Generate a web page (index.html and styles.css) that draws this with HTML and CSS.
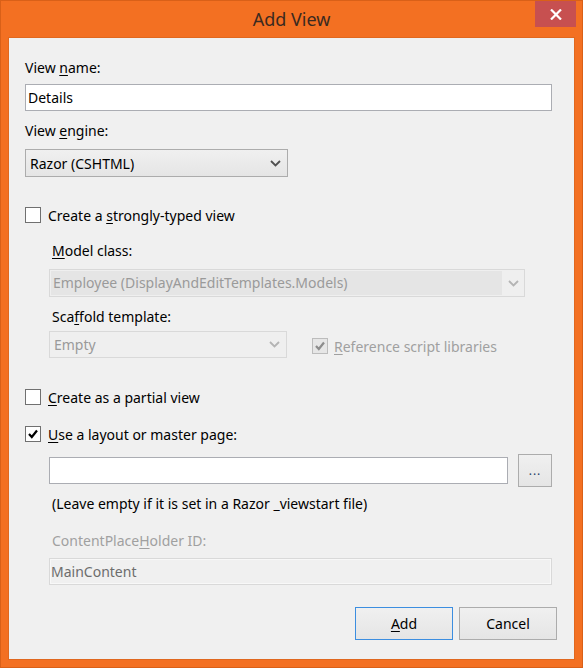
FILE: index.html
```html
<!DOCTYPE html>
<html>
<head>
<meta charset="utf-8">
<link rel="stylesheet" href="styles.css">
</head>
<body>
<div class="window">
  <div class="titlebar">
    <span></span>
    <span class="title">Add View</span>
    <span class="close"><svg width="12" height="11" viewBox="0 0 12 11"><path d="M1 0.5 L11 10.5 M11 0.5 L1 10.5" stroke="#fff" stroke-width="2.2" fill="none"/></svg></span>
  </div>
  <div class="client">
    <div class="label l-name">View <u>n</u>ame:</div>
    <div class="textbox tb-name">Details</div>
    <div class="label l-engine">View <u>e</u>ngine:</div>
    <div class="select sel-engine"><span>Razor (CSHTML)</span><svg class="chev" width="11" height="7" viewBox="0 0 11 7"><path d="M1 1 L5.5 5.5 L10 1" stroke="#505050" stroke-width="1.8" fill="none"/></svg></div>

    <div class="check-row cr-strong"><span class="box"></span><span>Create a <u>s</u>trongly-typed view</span></div>
    <div class="indent">
      <div class="label l-model"><u>M</u>odel class:</div>
      <div class="select disabled sel-model"><span class="hl">Employee (DisplayAndEditTemplates.Models)</span><svg class="chev" width="11" height="7" viewBox="0 0 11 7"><path d="M1 1 L5.5 5.5 L10 1" stroke="#b4b4b4" stroke-width="1.8" fill="none"/></svg></div>
      <div class="label l-scaffold">Sca<u>f</u>fold template:</div>
      <div class="scaffold-row">
        <div class="select disabled sel-empty"><span>Empty</span><svg class="chev" width="11" height="7" viewBox="0 0 11 7"><path d="M1 1 L5.5 5.5 L10 1" stroke="#b4b4b4" stroke-width="1.8" fill="none"/></svg></div>
        <div class="check-row ref disabled"><span class="box checked"><svg width="14" height="14" viewBox="0 0 14 14"><path d="M3 7 L5.8 10 L11 3.5" stroke="#8c8c8c" stroke-width="2.2" fill="none"/></svg></span><span><u>R</u>eference script libraries</span></div>
      </div>
    </div>

    <div class="check-row cr-partial"><span class="box"></span><span><u>C</u>reate as a partial view</span></div>
    <div class="check-row cr-layout"><span class="box"><svg width="14" height="14" viewBox="0 0 14 14"><path d="M3 7 L5.8 10 L11 3.5" stroke="#000" stroke-width="2.2" fill="none"/></svg></span><span><u>U</u>se a layout or master page:</span></div>
    <div class="indent">
      <div class="layout-row">
        <div class="textbox tb-layout"></div>
        <div class="button dots">...</div>
      </div>
      <div class="label hint">(Leave empty if it is set in a Razor _viewstart file)</div>
      <div class="label l-cph disabled-text">ContentPlace<u>H</u>older ID:</div>
      <div class="textbox disabled tb-cph">MainContent</div>
    </div>

    <div class="buttons">
      <div class="button default"><u>A</u>dd</div>
      <div class="button">Cancel</div>
    </div>
  </div>
</div>
</body>
</html>
```
FILE: styles.css
```css
* { box-sizing: border-box; }
html, body { margin: 0; padding: 0; }
body {
  font-family: "Noto Sans", "Open Sans", sans-serif;
  font-size: 14px;
  color: #000;
  background: #f37022;
  font-variant-ligatures: none;
}
u { text-decoration: underline; text-underline-offset: 2px; text-decoration-thickness: 1px; }
.window {
  width: 583px;
  height: 668px;
  background: #f37022;
  border: 1px solid #d96018;
  display: flex;
  flex-direction: column;
}
.titlebar {
  height: 36px;
  display: grid;
  grid-template-columns: 1fr auto 1fr;
  align-items: start;
}
.title {
  font-size: 18px;
  color: #3b2a20;
  line-height: 20px;
  margin-top: 8px;
}
.close {
  justify-self: end;
  width: 41px;
  height: 26px;
  margin-right: 6px;
  background: #c75050;
  display: flex;
  align-items: center;
  justify-content: center;
}
.client {
  margin: 0 7px;
  height: 623px;
  background: #f0f0f0;
  border: 1px solid #e0681f;
  padding: 0 0 0 16px;
}
.label { line-height: 20px; height: 20px; white-space: nowrap; }
.l-name { margin-top: 20px; }
.textbox {
  background: #fff;
  border: 1px solid #abadb3;
  height: 27px;
  line-height: 25px;
  padding-left: 2px;
}
.tb-name { margin-top: 6px; width: 527px; }
.l-engine { margin-top: 10px; }
.select {
  height: 28px;
  border: 1px solid #acacac;
  background: linear-gradient(#f0f0f0, #e5e5e5);
  display: flex;
  align-items: center;
  justify-content: space-between;
  padding: 0 6px 0 4px;
}
.sel-engine { margin-top: 8px; width: 263px; }
.check-row {
  display: flex;
  align-items: center;
  height: 20px;
  gap: 7px;
  white-space: nowrap;
}
.box {
  width: 16px;
  height: 16px;
  border: 1px solid #707070;
  background: #fff;
  display: flex;
  align-items: center;
  justify-content: center;
}
.cr-strong { margin-top: 28px; }
.indent { padding-left: 24px; }
.l-model { margin-top: 16px; padding-left: 3px; }
.select.disabled {
  background: #efefef;
  border-color: #d9d9d9;
  color: #9a9a9a;
}
.sel-model {
  margin-top: 8px;
  width: 476px;
  padding: 1px 5px 1px 1px;
  align-items: stretch;
}
.sel-model .hl {
  background: #e5e5e5;
  width: 451px;
  line-height: 24px;
  padding-left: 2px;
}
.sel-model .chev { align-self: center; }
.l-scaffold { margin-top: 10px; padding-left: 3px; }
.scaffold-row {
  margin-top: 4px;
  display: flex;
  align-items: center;
  gap: 25px;
}
.sel-empty { width: 238px; height: 27px; color: #a0a0a0; }
.ref { color: #a0a0a0; gap: 6px; margin-top: 3px; }
.box.checked { border-color: #bcbcbc; background: #e6e6e6; }
.cr-partial { margin-top: 29px; }
.cr-layout { margin-top: 17px; }
.layout-row {
  margin-top: 10px;
  display: flex;
  align-items: center;
  gap: 10px;
}
.tb-layout { width: 459px; }
.button {
  height: 33px;
  border: 1px solid #acacac;
  background: linear-gradient(#f0f0f0, #e5e5e5);
  display: flex;
  align-items: center;
  justify-content: center;
}
.dots { width: 34px; color: #1e3f66; font-size: 12px; letter-spacing: 1px; }
.hint { margin-top: 7px; padding-left: 3px; }
.l-cph { margin-top: 17px; padding-left: 3px; }
.disabled-text { color: #a0a0a0; }
.textbox.disabled {
  background: #f0f0f0;
  border: 1px solid #d9d9d9;
  box-shadow: inset 0 0 0 1px #f8f8f8;
  color: #6d6d6d;
}
.tb-cph { margin-top: 7px; width: 503px; padding-left: 1px; }
.buttons {
  margin-top: 22px;
  display: flex;
  justify-content: flex-end;
  gap: 6px;
  padding-right: 17px;
}
.buttons .button { width: 98px; }
.button.default { border-color: #3c8ee0; }
```
